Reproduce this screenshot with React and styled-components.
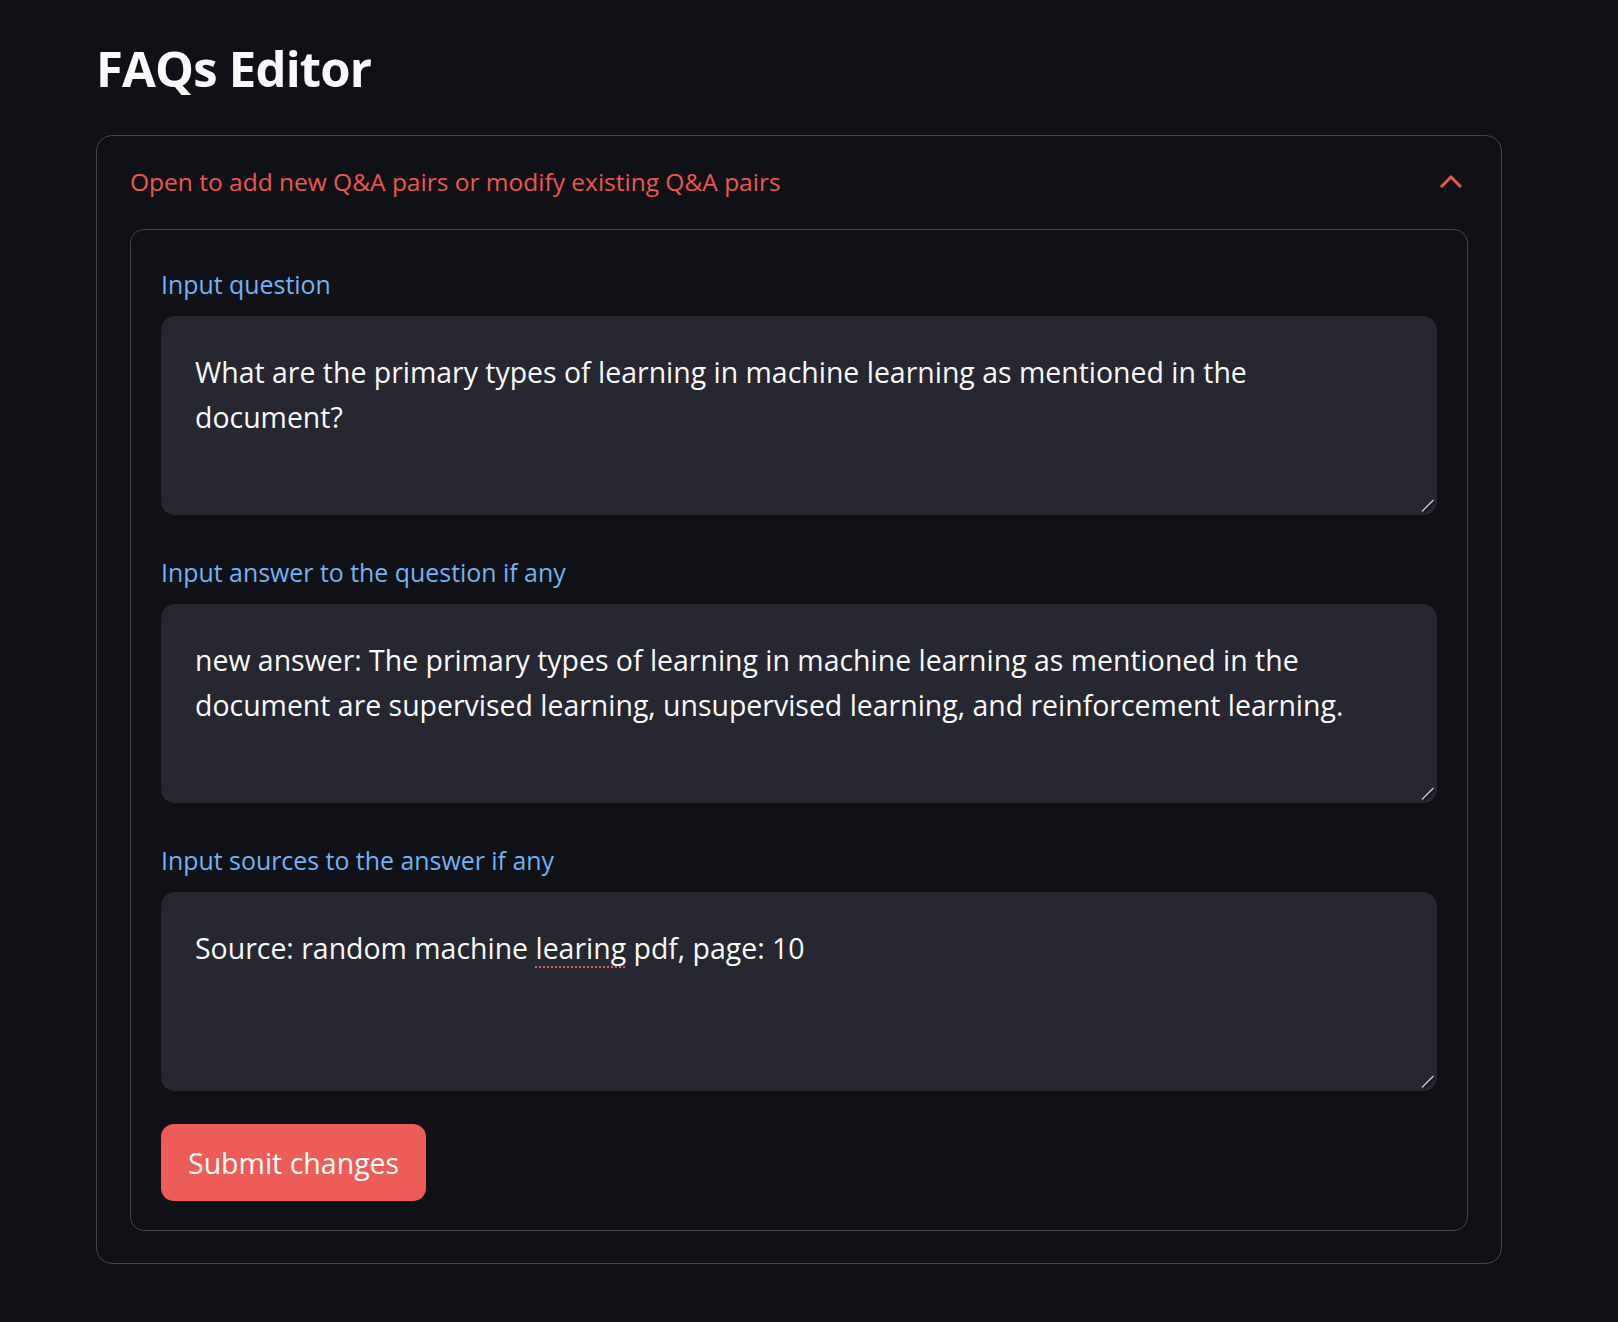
import React from 'react';
import styled, { createGlobalStyle } from 'styled-components';

const GlobalStyle = createGlobalStyle`
    body {
        margin: 0;
        background: #0f1116;
        color: #fafafa;
        font-family: "Open Sans", "Noto Sans", sans-serif;
    }
`;

const Page = styled.main`
    padding: 40px 116px 56px 96px;
`;

const Title = styled.h1`
    margin: 0 0 38px;
    font-size: 49px;
    font-weight: 700;
    line-height: 57px;
    letter-spacing: -0.8px;
    color: #fafafa;
`;

const Expander = styled.section`
    border: 1px solid #44464b;
    border-radius: 16px;
    padding: 0 33px 32px;
`;

const ExpanderHeader = styled.div`
    display: flex;
    align-items: center;
    justify-content: space-between;
    padding: 29px 5px 30px 0;
    font-size: 24.5px;
    line-height: 34px;
    color: #ef5550;
`;

const Form = styled.form`
    border: 1px solid #44464b;
    border-radius: 14px;
    padding: 37px 30px 29px;
`;

const Fields = styled.div`
    display: flex;
    flex-direction: column;
    gap: 40px;
`;

const Field = styled.div`
    display: flex;
    flex-direction: column;
`;

const Label = styled.label`
    font-size: 24.9px;
    line-height: 34px;
    color: #73b2f5;
    margin-bottom: 15px;
`;

const TextBox = styled.div`
    position: relative;
    box-sizing: border-box;
    height: 199px;
    padding: 34px 56px 0 34px;
    background: #262730;
    border-radius: 14px;
    font-size: 28.45px;
    line-height: 45px;
    color: #fafafa;
`;

const Misspelled = styled.span`
    text-decoration: underline dotted #e0605a;
    text-decoration-thickness: 2px;
    text-underline-offset: 7px;
`;

const Grip = styled.svg`
    position: absolute;
    right: 2px;
    bottom: 2px;
`;

const SubmitButton = styled.button`
    display: block;
    margin-top: 33px;
    height: 77px;
    padding: 0 27px;
    border: none;
    border-radius: 13px;
    background: #ed5c56;
    color: #fff;
    font-family: inherit;
    font-size: 28.5px;
    cursor: pointer;
`;

function ResizeGrip() {
    return (
        <Grip width="14" height="14" viewBox="0 0 14 14" aria-hidden="true">
            <line x1="2.5" y1="13.5" x2="13.5" y2="2.5" stroke="#15161b" strokeWidth="2" />
            <line x1="1" y1="12.5" x2="12.5" y2="1" stroke="#c9c9cc" strokeWidth="1.4" />
        </Grip>
    );
}

function App() {
    // the three Q&A inputs, in order
    const fields = [
        {
            label: 'Input question',
            value: 'What are the primary types of learning in machine learning as mentioned in the document?',
        },
        {
            label: 'Input answer to the question if any',
            value: 'new answer: The primary types of learning in machine learning as mentioned in the document are supervised learning, unsupervised learning, and reinforcement learning.',
        },
        {
            label: 'Input sources to the answer if any',
            value: (
                <>
                    Source: random machine <Misspelled>learing</Misspelled> pdf, page: 10
                </>
            ),
        },
    ];

    return (
        <Page>
            <GlobalStyle />
            <Title>FAQs Editor</Title>
            <Expander>
                <ExpanderHeader>
                    <span>Open to add new Q&amp;A pairs or modify existing Q&amp;A pairs</span>
                    <svg width="24" height="24" viewBox="0 0 24 24" aria-hidden="true">
                        <polyline points="2,17 12,7 22,17" fill="none" stroke="#ef5550" strokeWidth="3" />
                    </svg>
                </ExpanderHeader>
                <Form onSubmit={e => e.preventDefault()}>
                    <Fields>
                        {fields.map(field => (
                            <Field key={field.label}>
                                <Label>{field.label}</Label>
                                <TextBox role="textbox" aria-label={field.label}>
                                    {field.value}
                                    <ResizeGrip />
                                </TextBox>
                            </Field>
                        ))}
                    </Fields>
                    <SubmitButton type="submit">Submit changes</SubmitButton>
                </Form>
            </Expander>
        </Page>
    );
}

export default App;
